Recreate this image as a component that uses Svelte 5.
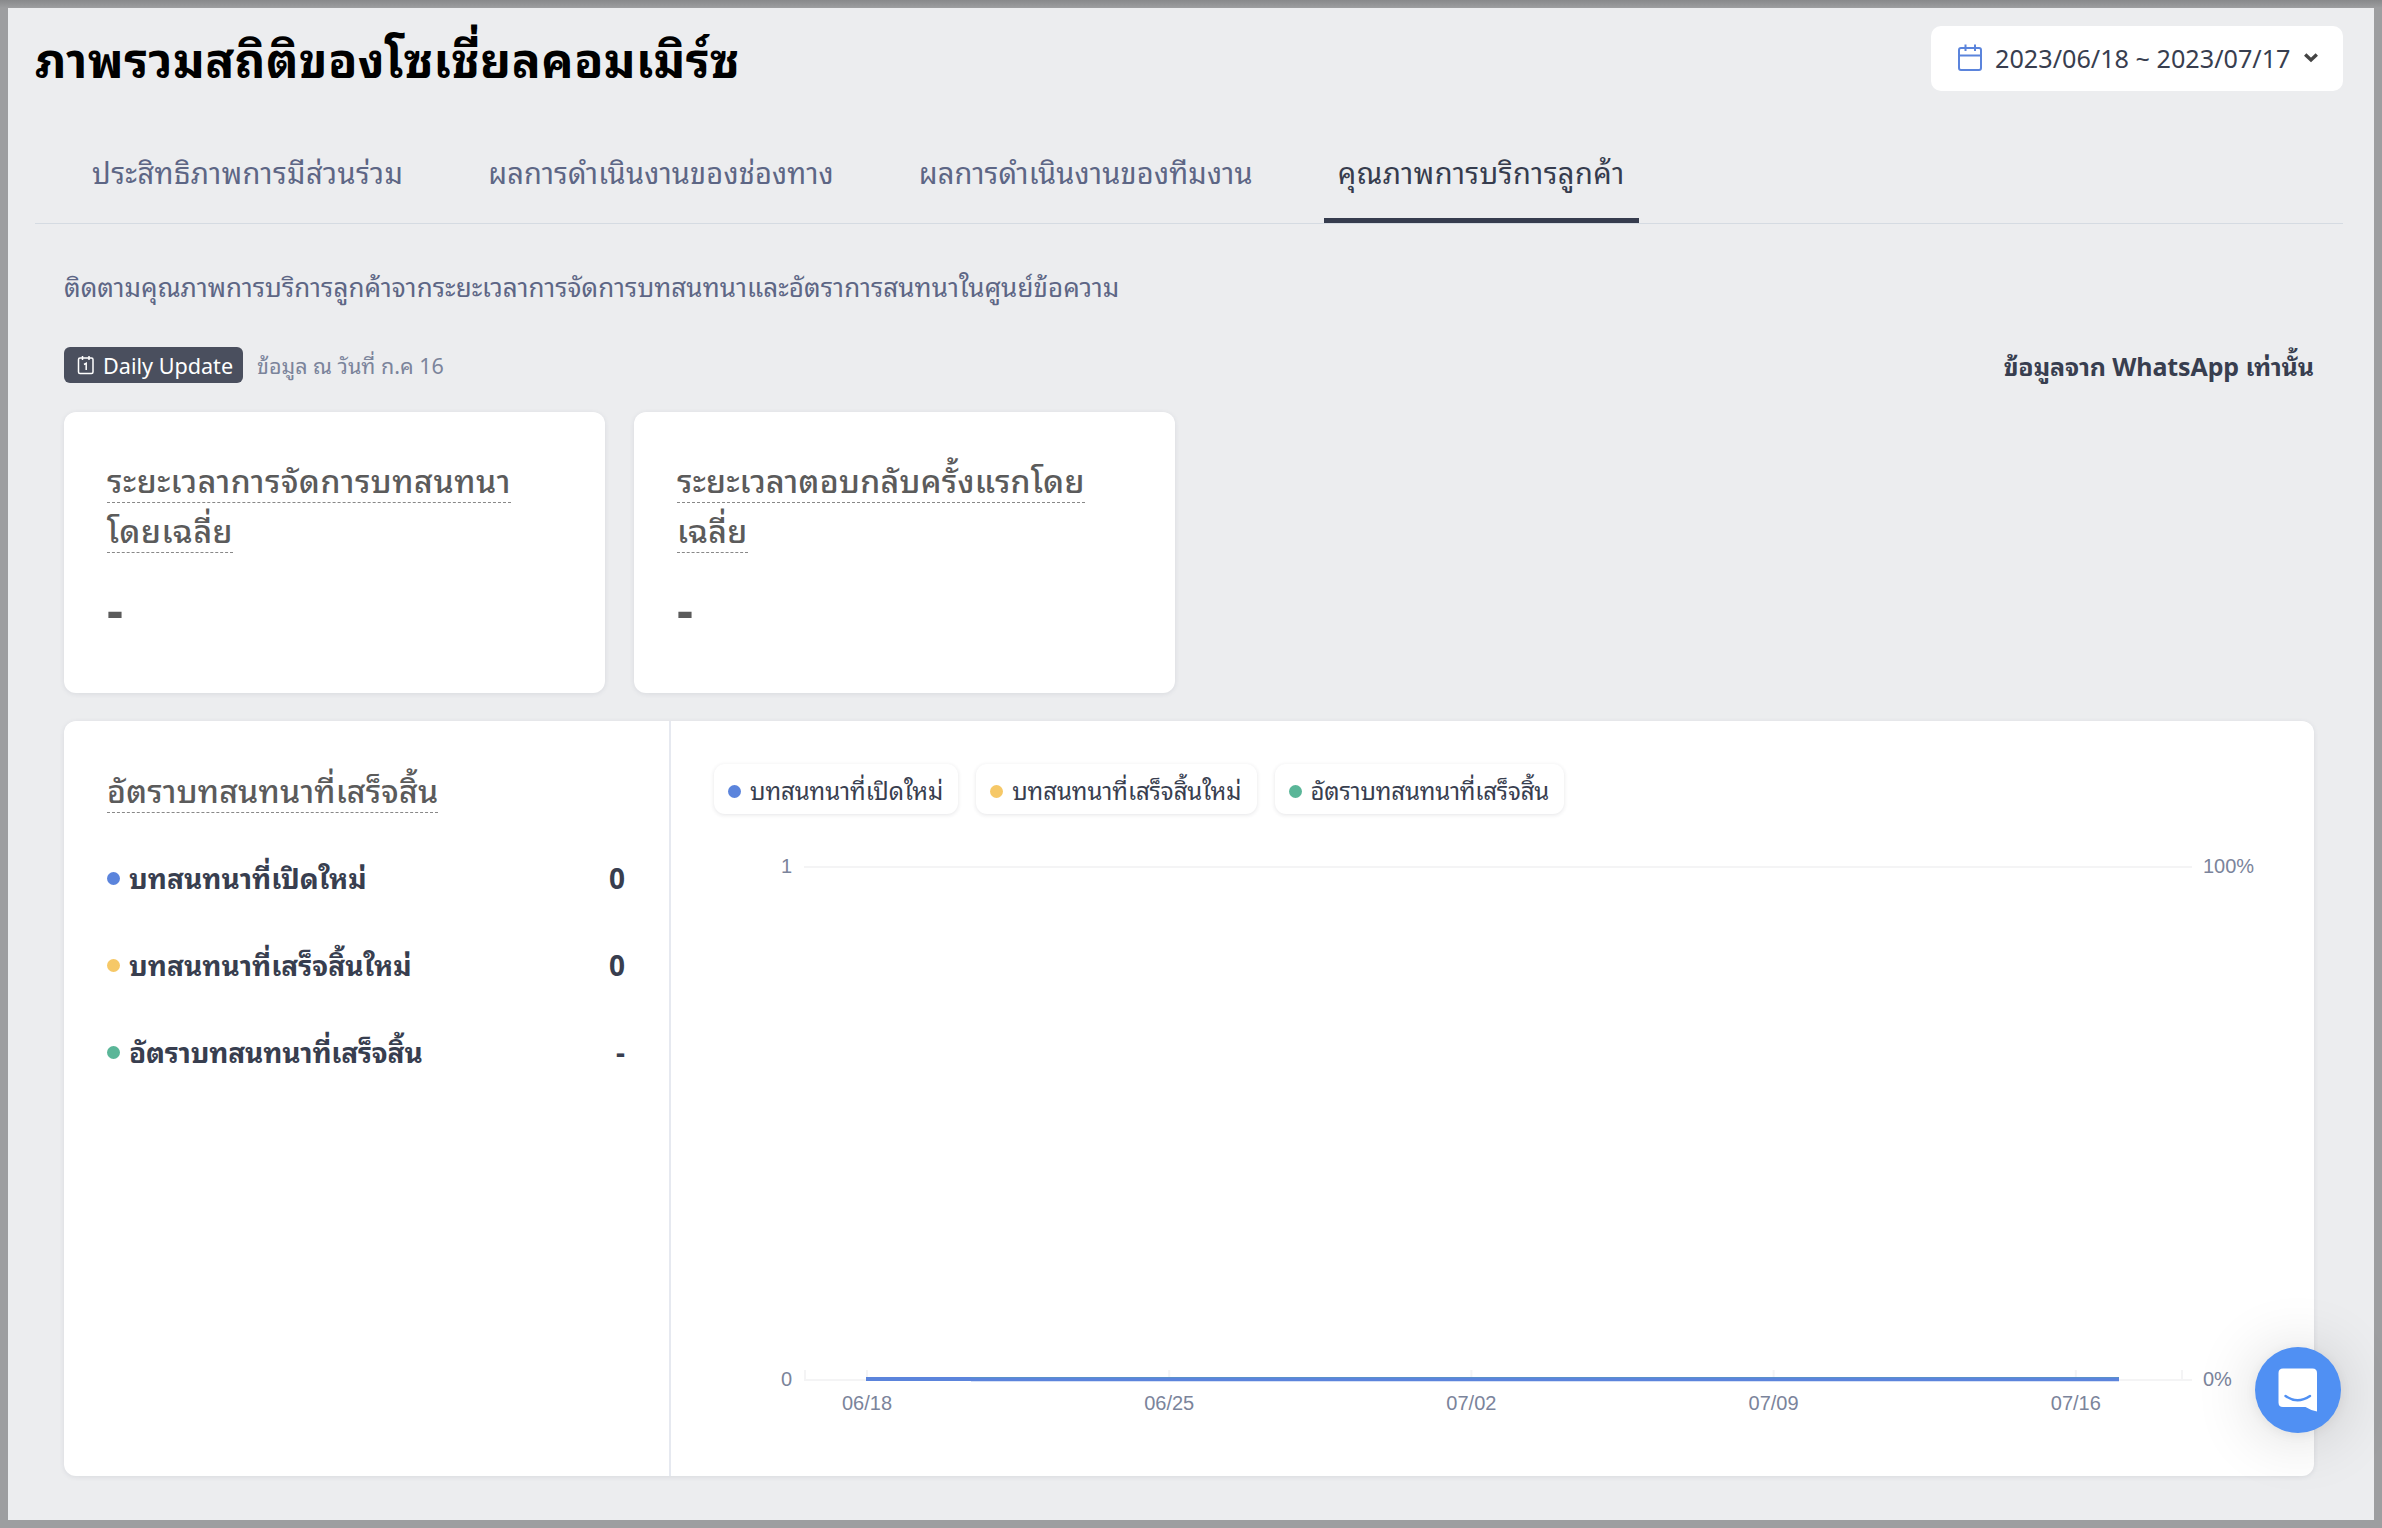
<script lang="ts">
  let selectedTab = 3;
  let dateRange = '2023/06/18 ~ 2023/07/17';

  const tabs = [
    'ประสิทธิภาพการมีส่วนร่วม',
    'ผลการดำเนินงานของช่องทาง',
    'ผลการดำเนินงานของทีมงาน',
    'คุณภาพการบริการลูกค้า'
  ];

  const cards = [
    { lines: ['ระยะเวลาการจัดการบทสนทนา', 'โดยเฉลี่ย'], value: '-' },
    { lines: ['ระยะเวลาตอบกลับครั้งแรกโดย', 'เฉลี่ย'], value: '-' }
  ];

  const series = [
    { name: 'บทสนทนาที่เปิดใหม่', value: '0', color: 'blue' },
    { name: 'บทสนทนาที่เสร็จสิ้นใหม่', value: '0', color: 'yellow' },
    { name: 'อัตราบทสนทนาที่เสร็จสิ้น', value: '-', color: 'green' }
  ];

  const days = ['06/18', '06/25', '07/02', '07/09', '07/16'];
  const dayX = (i: number) => 153 + i * 302.2;

  function selectTab(index: number) {
    selectedTab = index;
  }
</script>

<div class="frame">
  <div class="page">
    <header>
      <h1>ภาพรวมสถิติของโซเชี่ยลคอมเมิร์ซ</h1>
      <button class="range">
        <svg class="calendar" width="26" height="28" viewBox="0 0 26 28" fill="none" stroke="#5b84dc" stroke-width="2">
          <rect x="2" y="4" width="22" height="22" rx="2" />
          <path d="M2 11.500h22M8.500 .5v6.500M18 .5v6.500" />
        </svg>
        <span>{dateRange}</span>
        <svg class="chevron" width="14" height="10" viewBox="0 0 14 10" fill="none" stroke="#444" stroke-width="3.4">
          <path d="M1.200 1.500L7 7l5.800-5.500" />
        </svg>
      </button>
    </header>

    <nav>
      {#each tabs as tab, i}
        <button class="tab" class:selected={selectedTab === i} on:click={() => selectTab(i)}>{tab}</button>
      {/each}
    </nav>

    <main>
      <p class="intro">ติดตามคุณภาพการบริการลูกค้าจากระยะเวลาการจัดการบทสนทนาและอัตราการสนทนาในศูนย์ข้อความ</p>

      <div class="meta">
        <span class="badge">
          <svg width="18" height="20" viewBox="0 0 18 20" fill="none" stroke="#fff" stroke-width="1.5">
            <rect x="1.500" y="3" width="14.500" height="15.500" rx="1.500" />
            <path d="M5.500 1v4M12 1v4M7 9.500l2.200-1.200V15" />
          </svg>
          Daily Update
        </span>
        <span class="updated">ข้อมูล ณ วันที่ ก.ค 16</span>
        <strong>ข้อมูลจาก WhatsApp เท่านั้น</strong>
      </div>

      <div class="cards">
        {#each cards as card}
          <section class="card">
            <h2>
              {#each card.lines as line}
                <span class="hint">{line}</span><br />
              {/each}
            </h2>
            <div class="value">{card.value}</div>
          </section>
        {/each}
      </div>

      <section class="panel">
        <div class="summary">
          <h2><span class="hint">อัตราบทสนทนาที่เสร็จสิ้น</span></h2>
          {#each series as item}
            <div class="row">
              <i class="dot {item.color}"></i>
              <span>{item.name}</span>
              <b>{item.value}</b>
            </div>
          {/each}
        </div>

        <div class="chart">
          <div class="legend">
            {#each series as item}
              <button class="chip">
                <i class="dot {item.color}"></i>
                <span>{item.name}</span>
              </button>
            {/each}
          </div>
          <svg class="plot" width="1600" height="600" viewBox="0 0 1600 600">
            <g class="grid">
              <path d="M90 53H1478M90 566H1478M91 556V566M1468 556V566" />
              {#each days as day, i}
                <path d="M{dayX(i)} 556V566" />
              {/each}
            </g>
            <path class="rate" d="M152 565H1405" />
            <path class="opened" d="M152 565H257M257 565.300H1405" />
            <g class="labels">
              <text x="78" y="59" text-anchor="end">1</text>
              <text x="78" y="572" text-anchor="end">0</text>
              <text x="1489" y="59">100%</text>
              <text x="1489" y="572">0%</text>
              {#each days as day, i}
                <text x={dayX(i)} y="596" text-anchor="middle">{day}</text>
              {/each}
            </g>
          </svg>
        </div>
      </section>
    </main>
  </div>

  <button class="chat" aria-label="Chat">
    <svg width="40" height="44" viewBox="0 0 40 44">
      <path fill="#fff" d="M5 .5H34.500Q39 .5 39 5V43.500Q32 42 27.500 39H5Q.5 39 .5 34.500V5Q.5 .5 5 .5Z" />
      <path fill="none" stroke="#5090f3" stroke-width="2.400" stroke-linecap="round" d="M7.500 28Q19.500 36.500 32 28" />
    </svg>
  </button>
</div>

<style>
  :global(body) {
    margin: 0;
    background: #9d9ea0;
  }

  .frame {
    box-sizing: border-box;
    width: 2382px;
    height: 1528px;
    padding: 8px;
    overflow: hidden;
    background: linear-gradient(#88898b, #9d9ea0 8px);
    font-family: 'Noto Sans', 'Noto Sans Thai Looped', 'Noto Looped Thai', Loma, Garuda, sans-serif;
    color: #383e4f;
  }

  button {
    border: 0;
    background: none;
    padding: 0;
    font: inherit;
    color: inherit;
    cursor: pointer;
  }

  h1,
  h2,
  p {
    margin: 0;
  }

  .page {
    box-sizing: border-box;
    height: 1512px;
    padding: 18px 31px 0 27px;
    background: #ecedef;
  }

  header {
    display: flex;
    justify-content: space-between;
    height: 110px;
  }

  h1 {
    font-size: 48px;
    line-height: 68px;
    letter-spacing: 0.47px;
    color: #000;
    white-space: nowrap;
  }

  .range {
    display: flex;
    align-items: center;
    box-sizing: border-box;
    width: 412px;
    height: 65px;
    padding: 0 0 1px 26px;
    border-radius: 10px;
    background: #fff;
    font-size: 25.2px;
    white-space: nowrap;
  }

  .range span {
    margin: 0 13px 0 12px;
  }

  nav {
    display: flex;
    gap: 57px;
    height: 87px;
    padding-left: 43px;
    border-bottom: 1px solid #d5dbe2;
  }

  .tab {
    box-sizing: border-box;
    height: 87px;
    padding: 0 14px 8px;
    border-bottom: 5px solid transparent;
    font-size: 29px;
    line-height: 68px;
    letter-spacing: 0.18px;
    color: #5d6685;
    white-space: nowrap;
  }

  .tab:first-child {
    letter-spacing: 0.43px;
  }

  .tab:last-child {
    letter-spacing: 0.5px;
  }

  .tab.selected {
    border-color: #363c4e;
    color: #363c4e;
  }

  main {
    padding: 0 29px;
  }

  .intro {
    padding-top: 40px;
    font-size: 26px;
    line-height: 46px;
    letter-spacing: 0.07px;
    color: #5d6685;
    white-space: nowrap;
  }

  .meta {
    display: flex;
    align-items: center;
    height: 36px;
    margin-top: 37px;
    white-space: nowrap;
  }

  .badge {
    display: flex;
    align-items: center;
    gap: 8px;
    box-sizing: border-box;
    width: 179px;
    height: 36px;
    padding-left: 13px;
    border-radius: 6px;
    background: #4a4f5e;
    color: #fff;
    font-size: 21.6px;
  }

  .updated {
    margin: -2px 0 0 14px;
    font-size: 21.5px;
    color: #7b849b;
  }

  .meta strong {
    margin-left: auto;
    font-size: 25px;
    letter-spacing: -0.12px;
  }

  .cards {
    display: flex;
    gap: 29px;
    margin: 29px 0 28px;
  }

  .card,
  .panel {
    box-sizing: border-box;
    border-radius: 12px;
    background: #fff;
    box-shadow: 0 1px 5px rgba(50, 60, 90, 0.1);
  }

  .card {
    width: 541px;
    height: 281px;
    padding: 43px;
  }

  h2 {
    height: 100px;
    font-size: 32px;
    font-weight: 500;
    line-height: 50px;
    letter-spacing: 0.58px;
    color: #5b5b5b;
    white-space: nowrap;
  }

  .card + .card h2 {
    letter-spacing: 0.32px;
  }

  .hint {
    display: inline-block;
    box-sizing: border-box;
    height: 48px;
    margin-bottom: 2px;
    border-bottom: 1px dashed #888;
    line-height: 52px;
    vertical-align: top;
  }

  .value {
    margin-top: 24px;
    font-size: 50px;
    font-weight: 700;
    line-height: 60px;
    color: #5b5b5b;
  }

  .panel {
    display: flex;
    height: 755px;
  }

  .summary {
    box-sizing: border-box;
    width: 607px;
    padding: 44px 44px 0 43px;
    border-right: 2px solid #e6e9f0;
  }

  .summary h2 {
    height: 50px;
    margin-bottom: 39px;
    letter-spacing: 0.2px;
  }

  .row {
    display: flex;
    align-items: center;
    height: 48px;
    margin-bottom: 39px;
    font-size: 28px;
    font-weight: 700;
    white-space: nowrap;
  }

  .row span {
    padding-bottom: 3px;
  }

  .row b {
    margin-left: auto;
    font-weight: 700;
  }

  .dot {
    width: 13px;
    height: 13px;
    margin-right: 9px;
    border-radius: 50%;
  }

  .blue {
    background: #5b84dc;
  }

  .yellow {
    background: #f6c867;
  }

  .green {
    background: #5ab698;
  }

  .dot.green + span {
    letter-spacing: -0.2px;
  }

  .chart {
    padding: 43px 0 0 43px;
  }

  .legend {
    display: flex;
    gap: 18px;
    height: 50px;
  }

  .chip {
    display: flex;
    align-items: center;
    height: 50px;
    padding: 0 15px 0 14px;
    border-radius: 11px;
    box-shadow: 0 1px 4px rgba(40, 40, 60, 0.12);
    font-size: 24px;
    letter-spacing: -0.09px;
    white-space: nowrap;
  }

  .chip .dot {
    margin-top: 4px;
  }

  .plot {
    display: block;
  }

  .grid {
    stroke: #f4f4f5;
    stroke-width: 2;
    fill: none;
  }

  .rate {
    stroke: #5ab698;
    stroke-width: 4;
  }

  .opened {
    stroke: #5b84dc;
    stroke-width: 4;
  }

  .labels {
    font-family: 'Liberation Sans', Arial, sans-serif;
    font-size: 20px;
    fill: #7b849b;
  }

  .chat {
    position: absolute;
    left: 2255px;
    top: 1347px;
    display: grid;
    place-items: center;
    width: 86px;
    height: 86px;
    border-radius: 50%;
    background: #5090f3;
    box-shadow: 0 2px 12px rgba(0, 0, 0, 0.06), 0 4px 64px rgba(0, 0, 0, 0.16);
  }
</style>
